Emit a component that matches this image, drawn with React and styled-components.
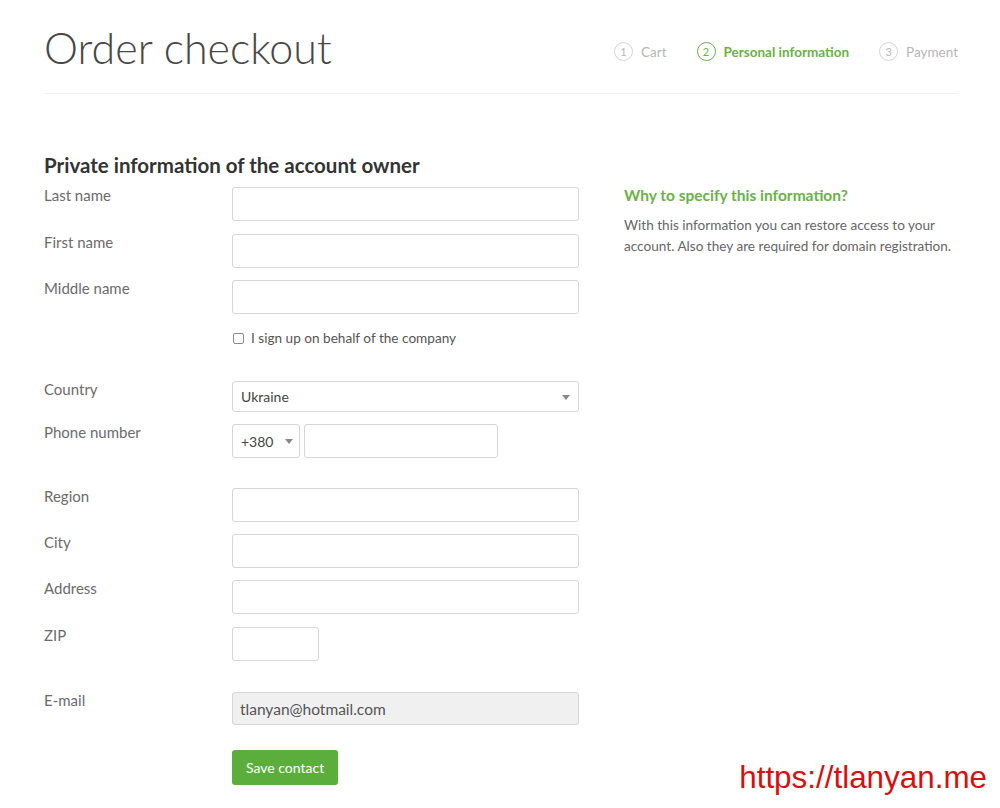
import React from "react";
import styled, { createGlobalStyle } from "styled-components";

const GlobalStyle = createGlobalStyle`
  html, body {
    margin: 0;
    padding: 0;
    background: #fff;
  }
  body {
    font-family: Lato, "Open Sans", sans-serif;
    color: #666;
  }
  * { box-sizing: border-box; }
`;

const green = "#68b345";
const buttonGreen = "#5cae3c";
const borderColor = "#d6d6d6";

const Page = styled.div`
  position: relative;
  height: 808px;
  overflow: hidden;
  padding: 0 42px 0 44px;
`;

const Header = styled.header`
  display: flex;
  justify-content: space-between;
  align-items: center;
  padding: 21px 0 18px;
  border-bottom: 1px solid #efefef;
`;

const Title = styled.h1`
  margin: 0;
  font-family: Lato, sans-serif;
  font-weight: 300;
  font-size: 43px;
  line-height: 54px;
  color: #474747;
`;

const Steps = styled.ol`
  display: flex;
  gap: 30px;
  margin: 7px 0 0;
  padding: 0;
  list-style: none;
`;

const Step = styled.li`
  display: flex;
  align-items: center;
  gap: 8px;
  font-size: 13.5px;
  font-weight: ${({ $active }) => ($active ? 700 : 400)};
  color: ${({ $active }) => ($active ? green : "#b5b5b5")};
`;

const StepNum = styled.span`
  display: inline-flex;
  align-items: center;
  justify-content: center;
  width: 19px;
  height: 19px;
  border-radius: 50%;
  border: 1px solid ${({ $active }) => ($active ? green : "#d4d4d4")};
  font-size: 11px;
  font-weight: 400;
  color: ${({ $active }) => ($active ? green : "#b5b5b5")};
`;

const Main = styled.main`
  display: grid;
  grid-template-columns: 535px 334px;
  column-gap: 45px;
  margin-top: 59px;
`;

const SectionTitle = styled.h2`
  margin: 0 0 10px;
  font-size: 20.5px;
  line-height: 24px;
  font-weight: 700;
  color: #333;
`;

const Row = styled.div`
  display: grid;
  grid-template-columns: 188px 347px;
  align-items: start;
  margin-bottom: ${({ $mb }) => $mb ?? 12}px;
`;

const Label = styled.label`
  font-size: 15px;
  line-height: 18px;
  margin-top: -1px;
  color: #6b6b6b;
`;

const Input = styled.input`
  display: block;
  width: ${({ $w }) => ($w ? `${$w}px` : "100%")};
  height: ${({ $h }) => $h ?? 34}px;
  padding: 0 7px;
  border: 1px solid ${borderColor};
  border-radius: 3px;
  background: ${({ readOnly }) => (readOnly ? "#f0f0f0" : "#fff")};
  font-family: Lato, sans-serif;
  font-size: 15.5px;
  color: #555;
  outline: none;
`;

const SelectBox = styled.div`
  position: relative;
  display: flex;
  align-items: center;
  width: ${({ $w }) => ($w ? `${$w}px` : "100%")};
  height: ${({ $h }) => $h ?? 34}px;
  padding: 0 8px;
  border: 1px solid ${borderColor};
  border-radius: 3px;
  background: #fff;
  font-size: 14px;
  color: #444;
  flex-shrink: 0;
`;

const Caret = styled.span`
  position: absolute;
  right: ${({ $r }) => $r ?? 8}px;
  top: 50%;
  margin-top: -2px;
  border-left: 4px solid transparent;
  border-right: 4px solid transparent;
  border-top: 5px solid #888;
`;

const PhoneGroup = styled.div`
  display: flex;
  gap: 4px;
`;

const CheckRow = styled.label`
  display: flex;
  align-items: center;
  gap: 7px;
  height: 24px;
  font-size: 13.6px;
  color: #555;
`;

const Box = styled.span`
  width: 11px;
  height: 11px;
  margin-left: 1px;
  border: 1px solid #8a8a8a;
  border-radius: 2px;
  background: #fff;
`;

const SaveButton = styled.button`
  height: 35px;
  padding: 0 14px;
  border: none;
  border-radius: 3px;
  background: ${buttonGreen};
  color: #fff;
  font-family: Lato, sans-serif;
  font-size: 14px;
  cursor: pointer;
`;

const Aside = styled.aside`
  padding-top: 33px;
`;

const AsideTitle = styled.h3`
  margin: 0 0 11px;
  font-size: 15.5px;
  line-height: 18px;
  font-weight: 700;
  color: ${green};
`;

const AsideText = styled.p`
  margin: 0;
  font-size: 13.6px;
  line-height: 21px;
  color: #666;
`;

const Watermark = styled.div`
  position: absolute;
  right: 13px;
  bottom: 12px;
  font-family: "Liberation Sans", Arial, sans-serif;
  font-size: 31.4px;
  line-height: 36px;
  color: #d70f0f;
`;

const steps = [
  { n: 1, label: "Cart" },
  { n: 2, label: "Personal information", active: true },
  { n: 3, label: "Payment" },
];

function Field({ label, mb, children }) {
  return (
    <Row $mb={mb}>
      <Label>{label}</Label>
      <div>{children}</div>
    </Row>
  );
}

export default function App() {
  return (
    <>
      <GlobalStyle />
      <Page>
        <Header>
          <Title>Order checkout</Title>
          <Steps>
            {steps.map(s => (
              <Step key={s.n} $active={s.active}>
                <StepNum $active={s.active}>{s.n}</StepNum>
                {s.label}
              </Step>
            ))}
          </Steps>
        </Header>

        <Main>
          <section>
            <SectionTitle>Private information of the account owner</SectionTitle>
            <Field label="Last name" mb={13}><Input /></Field>
            <Field label="First name"><Input /></Field>
            <Field label="Middle name"><Input /></Field>
            <Row $mb={31}>
              <span />
              <CheckRow>
                <Box />
                I sign up on behalf of the company
              </CheckRow>
            </Row>
            <Field label="Country">
              <SelectBox $h={31}>
                Ukraine
                <Caret />
              </SelectBox>
            </Field>
            <Field label="Phone number" mb={30}>
              <PhoneGroup>
                <SelectBox $w={68}>
                  +380
                  <Caret $r={6} />
                </SelectBox>
                <Input $w={194} />
              </PhoneGroup>
            </Field>
            <Field label="Region" mb={12}><Input /></Field>
            <Field label="City"><Input /></Field>
            <Field label="Address" mb={13}><Input /></Field>
            <Field label="ZIP" mb={31}><Input $w={87} /></Field>
            <Field label="E-mail" mb={25}>
              <Input $h={33} readOnly value="tlanyan@hotmail.com" />
            </Field>
            <Row>
              <span />
              <div>
                <SaveButton>Save contact</SaveButton>
              </div>
            </Row>
          </section>

          <Aside>
            <AsideTitle>Why to specify this information?</AsideTitle>
            <AsideText>
              With this information you can restore access to your account. Also they are
              required for domain registration.
            </AsideText>
          </Aside>
        </Main>

        <Watermark>https://tlanyan.me</Watermark>
      </Page>
    </>
  );
}
